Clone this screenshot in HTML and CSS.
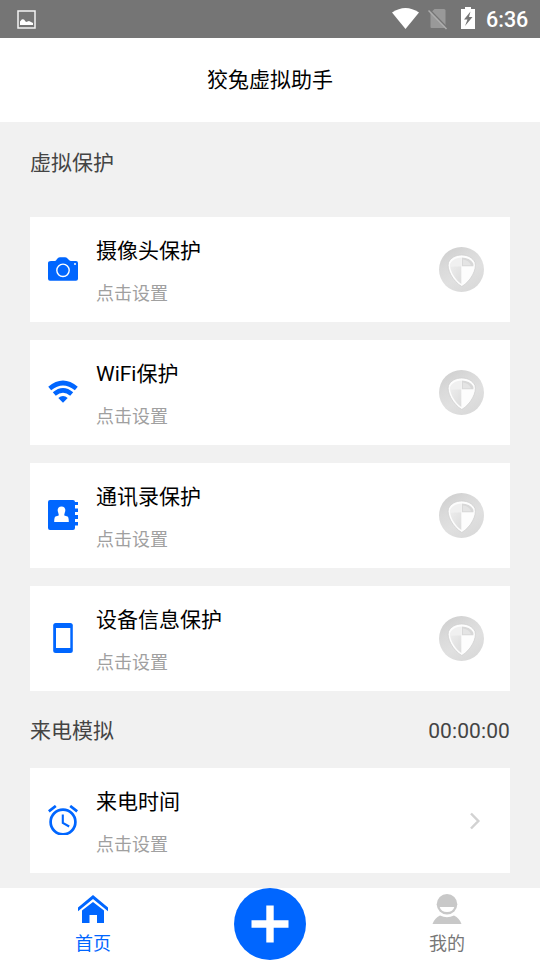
FILE: index.html
```html
<!DOCTYPE html>
<html lang="zh-CN">
<head>
<meta charset="utf-8">
<title>狡兔虚拟助手</title>
<link rel="stylesheet" href="styles.css">
</head>
<body>
<svg width="0" height="0" class="defs">
  <defs>
    <linearGradient id="disc" x1="0.2" y1="0" x2="0.8" y2="1">
      <stop offset="0" stop-color="#cfcfcf"/><stop offset="0.3" stop-color="#dadada"/><stop offset="0.6" stop-color="#e0e0e0"/><stop offset="1" stop-color="#d8d8d8"/>
    </linearGradient>
    <linearGradient id="quarter" x1="0" y1="0" x2="1" y2="1">
      <stop offset="0" stop-color="#ececec"/><stop offset="1" stop-color="#dcdcdc"/>
    </linearGradient>
    <symbol id="shield" viewBox="0 0 45 45">
      <circle cx="22.5" cy="22.5" r="22.5" fill="url(#disc)"/>
      <path d="M22.800 8C29 8 34 11 36 15.500C38 22 32 34 22.800 39.500C13.500 34 7.500 22 9.500 15.500C11.500 11 16.500 8 22.800 8Z" fill="#fdfdfd" stroke="#cdcdcd" stroke-width=".7"/>
      <path d="M22.300 10.500V19.300H11Q10.800 17.500 11.500 16C13.500 12.500 17.500 10.700 22.300 10.500Z" fill="#f0f0f0"/>
      <path d="M22.800 10.500C28 10.700 32 12.500 34 16Q34.700 17.500 34.400 19.300H22.800Z" fill="#d8d8d8"/>
      <path d="M24 12.500Q30.500 13.500 32 18.300H24Z" fill="#e4e4e4"/>
      <path d="M11 19.300H22.300V37C16.500 33 12 26 11 19.300Z" fill="url(#quarter)"/>
    </symbol>
  </defs>
</svg>
<div class="app">
  <header class="status">
    <svg width="19" height="19" viewBox="0 0 19 19"><rect x="1" y="1" width="17" height="17" fill="none" stroke="#f4f4f4" stroke-width="1.500"/><path d="M3 15V11.500L5 9.200L7 9.600L9 12L12 11L16 13V15Z" fill="#fff"/></svg>
    <div class="status-right">
      <svg class="signal" width="27" height="21" viewBox="0 0 27 21"><path d="M0 4.500Q13.500-4.500 27 4.500L13.500 21Z" fill="#fff"/></svg>
      <svg class="sim" width="20" height="21" viewBox="0 0 20 21"><path d="M6.500 0H16Q17.500 0 17.500 1.500V19H3.500Q2.500 19 2.500 18V4Z" fill="#999"/><path d="M2 1L20 19.500" stroke="#757575" stroke-width="1.500"/><path d="M.5 1.500L18.500 20" stroke="#adadad" stroke-width="1.500"/></svg>
      <svg class="battery" width="14" height="22" viewBox="0 0 14 22"><path d="M4 0H10V2H14V22H0V2H4Z" fill="#fff"/><path d="M9.500 4.500L3 12.500H6.500L4 19L11.500 10H8Z" fill="#757575"/></svg>
      <span class="clock">6:36</span>
    </div>
  </header>
  <h1 class="bar">狡兔虚拟助手</h1>
  <main class="content">
    <h2 class="section first">虚拟保护</h2>
    <section class="cards">
      <article class="card">
        <svg class="icon" viewBox="0 0 30 30"><path d="M3 7H7Q8 7 9 5L10 4Q10.500 3.300 12 3.300H17Q18.500 3.300 19 4L21 6Q22 7 23 7H28Q30 7 30 9V24.700Q30 26.700 28 26.700H2Q0 26.700 0 24.700V9Q0 7 3 7Z" fill="#06f"/><circle cx="15" cy="16.300" r="6.200" fill="none" stroke="#fff" stroke-width="1.400"/><circle cx="27" cy="10" r="1" fill="#fff"/></svg>
        <div class="text"><h3>摄像头保护</h3><p>点击设置</p></div>
        <svg class="shield"><use href="#shield"/></svg>
      </article>
      <article class="card">
        <svg class="icon" viewBox="0 0 30 30"><g fill="none" stroke="#06f" stroke-width="4.600"><path d="M1.700 11.500Q15 .5 28.300 11.500"/><path d="M6.300 17Q15 9.600 23.700 17"/></g><path d="M10.300 21Q15 17 19.700 21L15 25.700Z" fill="#06f"/></svg>
        <div class="text"><h3>WiFi保护</h3><p>点击设置</p></div>
        <svg class="shield"><use href="#shield"/></svg>
      </article>
      <article class="card">
        <svg class="icon" viewBox="0 0 30 30"><path d="M2 0H25Q27 0 27 2H30V5H27V8.500H30V12H27V15H30V19H27V22H30V25.500H27V28Q27 30 25 30H2Q0 30 0 28V2Q0 0 2 0Z" fill="#06f"/><path d="M13.500 6.500C17 6.500 18 9.500 16.900 12.200L16.300 14.500V15.500L19.500 16.500Q20.800 17 20.800 22H6.200Q6.200 17 7.500 16.500L10.700 15.500V14.500L10.100 12.200C9 9.500 10 6.500 13.500 6.500Z" fill="#fff"/></svg>
        <div class="text"><h3>通讯录保护</h3><p>点击设置</p></div>
        <svg class="shield"><use href="#shield"/></svg>
      </article>
      <article class="card">
        <svg class="icon" viewBox="0 0 30 30"><rect x="5.200" width="19.600" height="30" rx="2.500" fill="#06f"/><rect x="8" y="5" width="14.300" height="20" fill="#fff"/></svg>
        <div class="text"><h3>设备信息保护</h3><p>点击设置</p></div>
        <svg class="shield"><use href="#shield"/></svg>
      </article>
    </section>
    <div class="section second"><h2>来电模拟</h2><span>00:00:00</span></div>
    <article class="card">
      <svg class="icon" viewBox="0 0 30 30" fill="none" stroke="#06f"><circle cx="15" cy="17" r="12.400" stroke-width="2.700"/><path d="M.8 6.300L7.800 1M29.200 6.300L22.200 1" stroke-width="2.800"/><path d="M14.800 9.500V17.800L21.200 21.500" stroke-width="2.100"/></svg>
      <div class="text"><h3>来电时间</h3><p>点击设置</p></div>
      <svg class="arrow" viewBox="0 0 12 18"><path d="M2 1.500L9.300 9L2 16.500" fill="none" stroke="#d2d2d2" stroke-width="2.500"/></svg>
    </article>
  </main>
  <nav class="tabs">
    <a class="tab active"><svg viewBox="0 0 30 30"><path d="M0 13.500L15 1L30 13.500V17.200L15 5L0 17.200Z" fill="#06f"/><path d="M4 16.500L15 8L26 16.500V29H19V21H11.500V29H4Z" fill="#06f"/></svg><span>首页</span></a>
    <a class="add"><svg viewBox="0 0 72 72"><circle cx="36" cy="36" r="36" fill="#06f"/><path d="M36 17.500V54.500M17.500 36H54.500" stroke="#fff" stroke-width="7.400"/></svg></a>
    <a class="tab me"><svg viewBox="0 0 30 30"><g fill="#c8c8c8"><circle cx="15" cy="10.300" r="10.300"/><path d="M.5 30Q2.500 24 8 21.500Q15 25 22 21.500Q27.500 24 29.500 30Z"/></g><path d="M7.700 13H22.300Q21 18 15 18Q9 18 7.700 13Z" fill="#fff"/></svg><span>我的</span></a>
  </nav>
</div>
</body>
</html>
```
FILE: styles.css
```css
* { box-sizing: border-box; margin: 0; padding: 0; }
body { font-family: Roboto, "Noto Sans CJK SC", sans-serif; background: #f1f1f1; color: #000; }
h1, h2, h3 { font-weight: 400; }
svg { display: block; flex: none; }
.defs { position: absolute; }
.app { width: 540px; height: 960px; display: flex; flex-direction: column; overflow: hidden; }
.status { height: 38px; flex: none; background: #757575; display: flex; align-items: center; justify-content: space-between; padding: 0 12px 0 17px; }
.status-right { display: flex; align-items: center; }
.signal { margin-bottom: 2px; }
.sim { margin-left: 9px; }
.battery { margin-left: 13px; margin-bottom: 2px; }
.clock { margin-left: 11px; width: 42px; font-size: 21.500px; font-weight: 500; line-height: 38px; color: #fff; padding-top: 1px; height: 38px; white-space: nowrap; }
.bar { height: 84px; flex: none; background: #fff; font-size: 21px; line-height: 84px; text-align: center; }
.content { flex: 1; padding: 0 30px; }
.section { font-size: 21px; color: #444; }
.section h2 { font-size: 21px; }
.first { height: 95px; line-height: 82px; }
.cards { display: flex; flex-direction: column; gap: 18px; }
.card { height: 105px; background: #fff; display: flex; align-items: center; padding: 0 26px 0 18px; }
.icon { width: 30px; height: 30px; margin-bottom: 1px; }
.text { flex: 1; align-self: flex-start; margin-left: 18px; padding-top: 19px; }
.text h3 { font-size: 21px; line-height: 30px; }
.text p { font-size: 18px; line-height: 26px; margin-top: 15px; color: #a0a0a0; }
.shield { width: 45px; height: 45px; }
.arrow { width: 12px; height: 18px; margin-right: 3px; }
.second { height: 77px; line-height: 80px; display: flex; justify-content: space-between; }
.second span { letter-spacing: .1px; }
.tabs { height: 72px; flex: none; background: #fff; display: flex; justify-content: space-between; padding: 0 75px; }
.tab { width: 36px; display: flex; flex-direction: column; align-items: center; padding-top: 6px; font-size: 18px; line-height: 24px; color: #777; }
.tab svg { width: 30px; height: 30px; }
.tab span { margin-top: 8px; white-space: nowrap; }
.active { color: #06f; }
.add svg { width: 72px; height: 72px; }
```
